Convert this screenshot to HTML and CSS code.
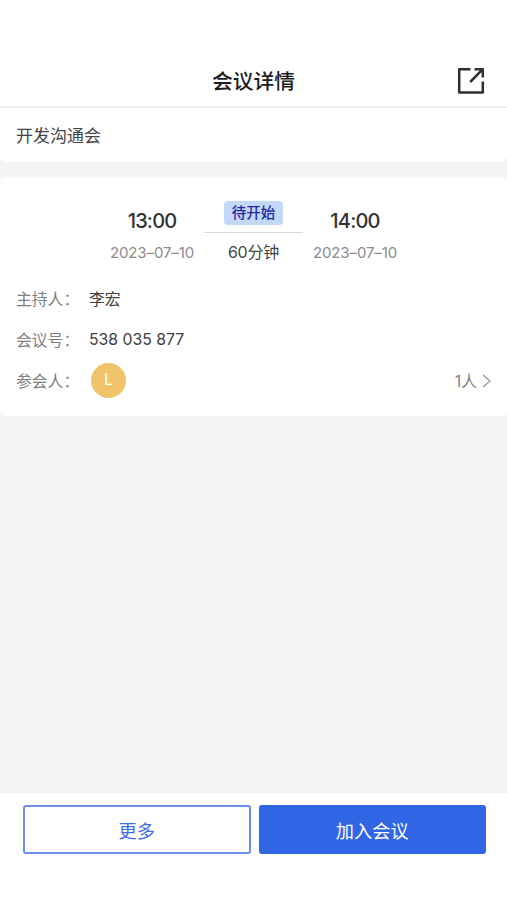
FILE: index.html
```html
<!DOCTYPE html>
<html lang="zh-CN">
<head>
    <meta charset="UTF-8">
    <meta name="viewport" content="width=device-width, initial-scale=1.0">
    <title>会议详情</title>
    <link rel="stylesheet" href="styles.css">
</head>
<body>
    <div class="page">
        <header class="header">
            <h1 class="title">会议详情</h1>
            <svg class="share" width="28" height="28" viewBox="0 0 28 28">
                <path d="M13.5 2.2H2.2V25.6H25.8V14.5M17.5 2.2H25.8V10.5M25.3 2.7L13.2 15" />
            </svg>
        </header>

        <div class="topic">开发沟通会</div>

        <main class="card">
            <div class="schedule">
                <div class="time-block">
                    <div class="time">13:00</div>
                    <div class="date">2023–07–10</div>
                </div>
                <div class="duration-block">
                    <span class="status">待开始</span>
                    <div class="line"></div>
                    <div class="duration">60分钟</div>
                </div>
                <div class="time-block">
                    <div class="time">14:00</div>
                    <div class="date">2023–07–10</div>
                </div>
            </div>

            <div class="row">
                <span class="label">主持人：</span>
                <span class="value">李宏</span>
            </div>
            <div class="row">
                <span class="label">会议号：</span>
                <span class="value">538 035 877</span>
            </div>
            <div class="row">
                <span class="label">参会人：</span>
                <span class="avatar">L</span>
                <span class="count">1人</span>
                <svg class="chevron" width="9" height="14" viewBox="0 0 9 14">
                    <path d="M1 1L8 7L1 13" />
                </svg>
            </div>
        </main>

        <footer class="footer">
            <button class="btn">更多</button>
            <button class="btn btn-primary">加入会议</button>
        </footer>
    </div>
</body>
</html>
```

FILE: styles.css
```css
* {
    box-sizing: border-box;
}

body {
    margin: 0;
    background: #f5f5f5;
    font-family: Inter, "Noto Sans CJK SC", sans-serif;
    color: #454545;
}

.page {
    height: 900px;
    display: flex;
    flex-direction: column;
    overflow: hidden;
}

.header {
    height: 108px;
    padding: 54px 22px 0;
    display: grid;
    grid-template-columns: 28px 1fr 28px;
    align-items: center;
    background: #fff;
    border-bottom: 2px solid #eee;
}

.title {
    grid-column: 2;
    margin: 0;
    padding-top: 4px;
    font-size: 20.8px;
    line-height: 30px;
    font-weight: 500;
    text-align: center;
    color: #1c1c1c;
}

.share {
    margin-top: 1px;
    fill: none;
    stroke: #303030;
    stroke-width: 2.5;
    stroke-linejoin: round;
}

.topic {
    height: 54px;
    padding: 1px 16px 0;
    background: #fff;
    border-radius: 0 0 5px 5px;
    font-size: 17px;
    line-height: 54px;
}

.card {
    height: 239px;
    margin-top: 15px;
    padding: 23px 16px 0;
    background: #fff;
    border-radius: 6px;
}

.schedule {
    height: 78px;
    display: flex;
    justify-content: center;
    text-align: center;
}

.time-block {
    width: 104px;
    padding-top: 7px;
}

.time {
    font-size: 20px;
    line-height: 28px;
    font-weight: 500;
    letter-spacing: -0.8px;
    color: #333;
}

.date {
    margin-top: 6px;
    font-size: 15px;
    line-height: 24px;
    letter-spacing: -0.1px;
    color: #8c8c8c;
}

.duration-block {
    width: 99px;
}

.status {
    display: block;
    width: 59px;
    height: 24px;
    margin: 1px auto 0;
    background: #c3d8f7;
    border-radius: 4px;
    font-size: 14.5px;
    line-height: 24px;
    font-weight: 500;
    color: #2525a8;
}

.line {
    height: 1px;
    margin-top: 7px;
    background: #d9d9d9;
}

.duration {
    margin-top: 7px;
    font-size: 16px;
    line-height: 24px;
    letter-spacing: -0.2px;
}

.row {
    height: 41px;
    display: flex;
    align-items: center;
    font-size: 15.8px;
}

.label {
    width: 73px;
    white-space: nowrap;
    color: #808080;
}

.value {
    color: #404040;
}

.avatar {
    width: 35px;
    height: 35px;
    margin-left: 2px;
    background: #f0c46a;
    border-radius: 50%;
    font-size: 16px;
    line-height: 33px;
    text-align: center;
    color: #fff;
}

.count {
    margin-left: auto;
    color: #808080;
}

.chevron {
    margin-left: 5px;
    fill: none;
    stroke: #999;
    stroke-width: 1.4;
}

.footer {
    height: 106px;
    margin-top: auto;
    padding: 11px 21px 0 23px;
    display: flex;
    gap: 8px;
    background: #fff;
}

.btn {
    flex: 1;
    height: 49px;
    padding: 0;
    background: #fff;
    border: 2px solid #6c90e9;
    border-radius: 3px;
    font-family: inherit;
    font-size: 18.2px;
    color: #3f6ee0;
}

.btn-primary {
    background: #3065e6;
    border-color: #3065e6;
    color: #fff;
}
```
